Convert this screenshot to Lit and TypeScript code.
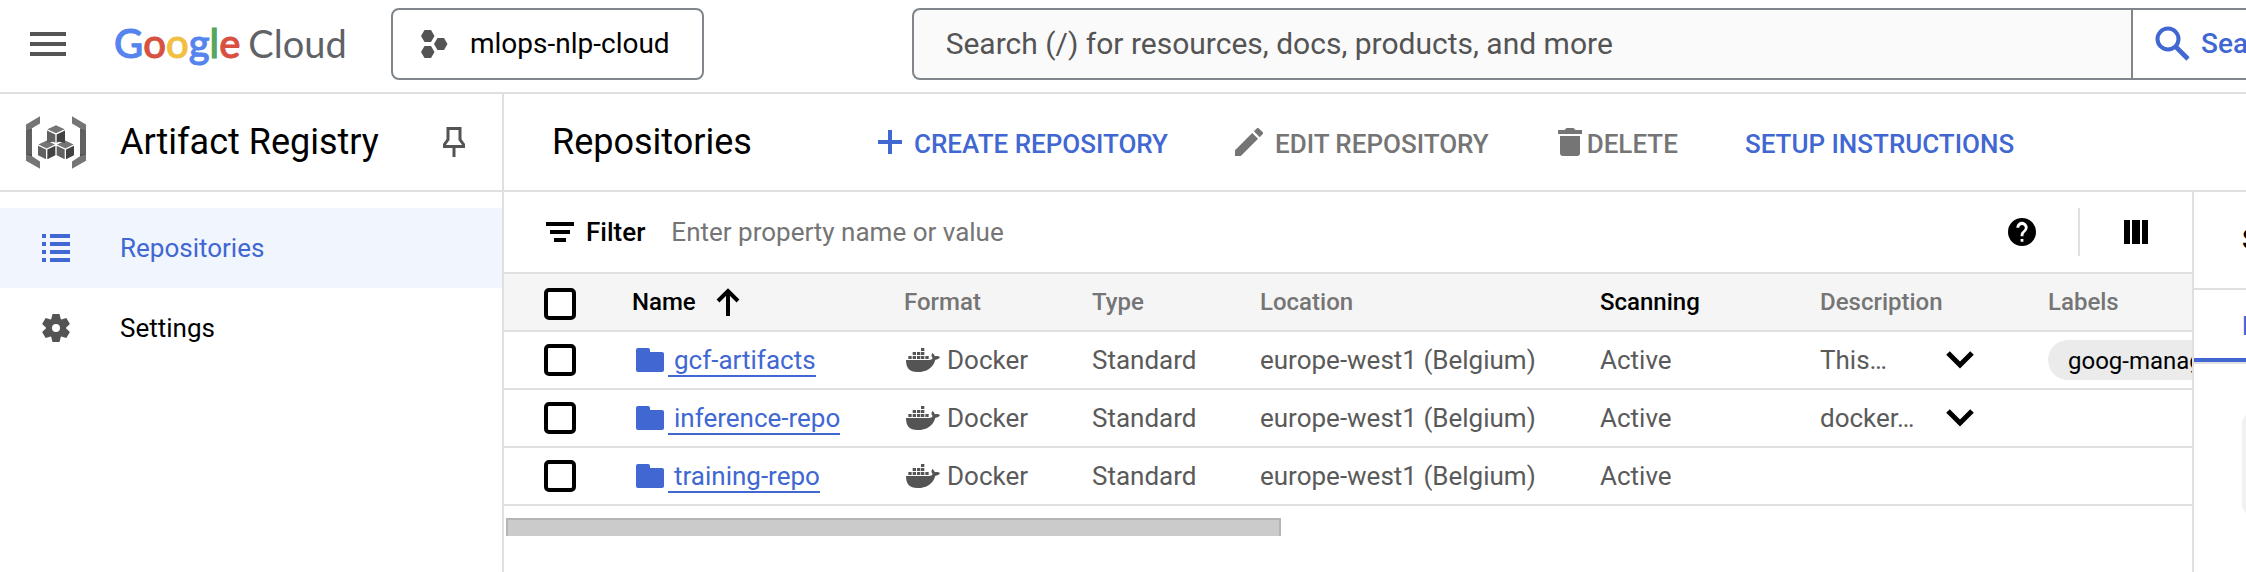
import { LitElement, html, css, svg, nothing } from 'lit';
import { customElement, state } from 'lit/decorators.js';

interface Repository {
  name: string;
  description: string;
  labels: string[];
}

const REPOSITORIES: Repository[] = [
  { name: 'gcf-artifacts', description: 'This…', labels: ['goog-managed-by: cloudfunctions'] },
  { name: 'inference-repo', description: 'docker…', labels: [] },
  { name: 'training-repo', description: '', labels: [] },
];

const icon = (w: number, h: number, viewBox: string, body: unknown) =>
  html`<svg width=${w} height=${h} viewBox=${viewBox} fill="currentColor" aria-hidden="true">${body}</svg>`;

const menuIcon = icon(36, 24, '0 0 36 24', svg`<path d="M0 0h36v4H0zM0 10h36v4H0zM0 20h36v4H0z"/>`);

const projectIcon = icon(27, 28, '0 0 27 28', svg`
  <path d="M3.5 0h6.5l3.5 6-3.5 6H3.5L0 6zM3.5 16h6.5l3.5 6-3.5 6H3.5L0 22zM16.5 8h6.5l3.5 6-3.5 6h-6.5L13 14z"/>`);

const searchIcon = icon(36, 36, '0 0 36 36', svg`
  <circle cx="13" cy="13" r="10.5" fill="none" stroke="currentColor" stroke-width="4"/>
  <path d="M20 20l13 13" stroke="currentColor" stroke-width="4.6"/>`);

const registryIcon = icon(60, 53, '0 0 180 158', svg`
  <path fill="#616161" d="M0 40h18v78H0zM162 40h18v78h-18z"/>
  <path fill="#757575" d="M0 25L42 0v22L18 36 0 45zM0 134l42 24v-22l-24-16-18-5zM180 25L138 0v22l24 14 18 9zM180 134l-42 24v-22l24-16 18-5z"/>
  <path fill="#424242" d="M0 45l18-9v4zM180 45l-18-9v4zM0 115l18 5v-5zM180 115l-18 5v-5z"/>
  <path fill="#757575" d="M90 27l26 12-26 12-26-12zM62 73l25 12-25 12-25-12zM118 73l25 12-25 12-25-12z"/>
  <path fill="#616161" d="M63 43l25 12v25l-7-3-18 3zM36 89l24 11v29l-24-12zM92 89l24 11v29l-24-12z"/>
  <path fill="#424242" d="M117 43L92 55v25l7-3 18 3zM88 89l-24 11v29l24-12zM144 89l-24 11v29l24-12z"/>`);

const pinIcon = icon(22, 30, '0 0 22 30', svg`
  <path d="M5 1.5h12v11l3.500 5v2h-19v-2l3.500-5z" fill="none" stroke="currentColor" stroke-width="3"/>
  <path d="M9.500 20h3v10h-3z"/>`);

const listIcon = icon(28, 28, '0 0 28 28', svg`
  <path d="M0 0h4v4H0zM0 8h4v4H0zM0 16h4v4H0zM0 24h4v4H0zM8 0h20v4H8zM8 8h20v4H8zM8 16h20v4H8zM8 24h20v4H8z"/>`);

const gearIcon = icon(28, 28, '-14 -14 28 28', svg`
  <circle r="7" fill="none" stroke="currentColor" stroke-width="6"/>
  ${[0, 60, 120].map(a => svg`<path transform="rotate(${a})" d="M-3.500-14h7l1.500 6h-10zM-3.500 14h7l1.500-6h-10z"/>`)}`);

const plusIcon = icon(24, 24, '0 0 24 24', svg`<path d="M10 0h4v10h10v4H14v10h-4V14H0v-4h10z"/>`);

const pencilIcon = icon(28, 28, '3 3 18 18', svg`
  <path d="M3 17.250V21h3.750L17.810 9.940l-3.750-3.750zM20.710 7.040a1 1 0 0 0 0-1.410l-2.340-2.340a1 1 0 0 0-1.410 0l-1.830 1.830 3.750 3.750z"/>`);

const trashIcon = icon(26, 28, '-2 0 26 28', svg`
  <path d="M0 2h6.500l2-2h7l2 2H24v4H0zM2 8h20v17a3 3 0 0 1-3 3H5a3 3 0 0 1-3-3z"/>`);

const filterIcon = icon(28, 20, '0 0 28 20', svg`<path d="M0 0h28v4H0zM4 8h20v4H4zM8 16h12v4H8z"/>`);

const helpIcon = icon(28, 28, '2 2 20 20', svg`
  <path d="M12 2a10 10 0 1 0 0 20 10 10 0 0 0 0-20zm1 17h-2v-2h2zm2.070-7.750l-.9.920C13.450 12.900 13 13.500 13 15h-2v-.5c0-1.100.45-2.100 1.170-2.830l1.240-1.260A2 2 0 1 0 10 9H8a4 4 0 1 1 7.070 2.250z"/>`);

const columnsIcon = icon(24, 24, '0 0 24 24', svg`<path d="M0 0h6v24H0zM8 0h8v24H8zM18 0h6v24h-6z"/>`);

const sortIcon = icon(24, 28, '0 0 24 28', svg`
  <path d="M12 28V3M2 13L12 3l10 10" fill="none" stroke="currentColor" stroke-width="4"/>`);

const folderIcon = icon(28, 24, '0 0 28 24', svg`
  <path d="M2 0h10a2 2 0 0 1 2 2v2h12a2 2 0 0 1 2 2v16a2 2 0 0 1-2 2H2a2 2 0 0 1-2-2V2a2 2 0 0 1 2-2z"/>`);

const dockerIcon = icon(34, 24, '0 0 102 72', svg`
  <path d="M45 0h10v9H45zM20 12h10v9H20zM33 12h10v9H33zM45 12h10v9H45zM7 24h10v9H7zM20 24h10v9H20zM33 24h10v9H33zM45 24h10v9H45zM58 24h10v9H58z"/>
  <path d="M0 36h68c7 0 11-3 12-6-5-4-4-11-1-15 4 3 7 6 7 10 6-2 12-1 16 2-3 6-8 8-14 8-7 25-26 37-54 37C10 72 0 60 0 36z"/>`);

const chevronIcon = icon(28, 18, '0 0 28 18', svg`
  <path d="M2 2l12 12L26 2" fill="none" stroke="currentColor" stroke-width="5"/>`);

@customElement('app-root')
export class AppRoot extends LitElement {
  @state() private selected = new Set<string>();

  static styles = css`
    :host {
      --blue: #4067d2;
      --line: #e0e0e0;
      --muted: #757575;
      --text: #5a5a5a;
      display: flex;
      flex-direction: column;
      min-height: 100vh;
      overflow: hidden;
      background: #fff;
      color: #000;
      font: 400 26px/32px Roboto, sans-serif;
    }
    * { box-sizing: border-box; }
    svg { display: block; flex: none; }
    button {
      margin: 0; padding: 0; border: 0; background: none;
      font: inherit; color: inherit; cursor: pointer;
      display: flex; align-items: center;
    }
    input { font: inherit; margin: 0; border: 0; outline: 0; background: none; min-width: 0; }
    input::placeholder { color: var(--muted); opacity: 1; }
    h1, h2 { margin: 0; font-size: 36px; font-weight: 400; line-height: 44px; white-space: nowrap; }

    .topbar {
      display: flex; align-items: center;
      height: 94px; padding: 0 0 4px 30px;
      border-bottom: 2px solid var(--line);
      flex: none;
    }
    .menu { color: #545454; }
    .logo {
      display: flex; align-items: baseline; gap: 8px;
      width: 234px; margin: 0 0 0 48px; padding-bottom: 3px;
      font-family: Lato, sans-serif; line-height: 48px;
      text-decoration: none; white-space: nowrap;
    }
    .google { font-size: 40px; font-weight: 500; -webkit-text-stroke: 1px currentColor; display: flex; }
    .cloud { font-size: 38px; color: #5f6368; }
    .g-blue { color: #5684ee; -webkit-text-stroke-color: #5684ee; }
    .g-red { color: #d85140; -webkit-text-stroke-color: #d85140; }
    .g-yellow { color: #f1bf42; -webkit-text-stroke-color: #f1bf42; }
    .g-green { color: #58a55c; -webkit-text-stroke-color: #58a55c; }
    .project {
      height: 72px; padding: 0 32px 0 28px; gap: 22px;
      margin: 0 208px 0 43px;
      border: 2px solid #80868b; border-radius: 8px;
      font-size: 28px; white-space: nowrap; flex: none;
    }
    .project svg { color: #545454; }
    .search {
      flex: 1; min-width: 0; display: flex; height: 72px;
      border: 2px solid #80868b; border-right: 0; border-radius: 8px 0 0 8px;
      background: #fafafa; overflow: hidden;
    }
    .search-box { flex: 1; padding: 0 32px; font-size: 30px; }
    .search-box::placeholder { color: #545454; }
    .search-go {
      width: 115px; padding-left: 22px; gap: 10px; overflow: hidden; flex: none;
      border-left: 2px solid #80868b; background: #fff;
      color: var(--blue); font-size: 28px; font-weight: 500;
    }

    .body { flex: 1; display: flex; min-width: 0; }
    .sidebar { width: 504px; flex: none; border-right: 2px solid var(--line); }
    .product {
      display: flex; align-items: center;
      height: 98px; padding: 0 37px 0 26px; gap: 34px;
      border-bottom: 2px solid var(--line);
    }
    .product h2 { flex: 1; }
    .pin { color: #545454; }
    .nav { padding-top: 16px; }
    .nav-item {
      display: flex; align-items: center; gap: 50px;
      height: 80px; padding-left: 42px;
      color: #000; text-decoration: none;
    }
    .nav-item svg { color: #545454; }
    .nav-item.active, .nav-item.active svg { color: var(--blue); }
    .nav-item.active { background: #f0f5fe; }

    .content { flex: 1; min-width: 0; display: flex; flex-direction: column; }
    .toolbar {
      display: flex; align-items: center; gap: 67px;
      height: 98px; padding-left: 48px;
      border-bottom: 2px solid var(--line);
    }
    .toolbar h1 { width: 259px; }
    .action {
      gap: 12px; color: var(--muted);
      font-weight: 500; white-space: nowrap; flex: none;
    }
    .action span { padding-top: 3px; }
    .action.primary { color: var(--blue); }
    .action.tight { gap: 5px; }

    .columns { flex: 1; display: flex; min-width: 0; }
    .listing { flex: 1; min-width: 0; overflow: hidden; }
    .filter { display: flex; align-items: center; height: 80px; padding: 0 44px 0 42px; }
    .filter label { display: flex; align-items: center; gap: 12px; font-weight: 500; }
    .filter-box { flex: 1; padding: 0 26px; }
    .divider { width: 2px; height: 48px; margin: 0 44px 0 42px; background: var(--line); }

    table { width: 100%; table-layout: fixed; border-collapse: separate; border-spacing: 0; }
    th, td { padding: 0; height: 58px; text-align: left; white-space: nowrap; border-bottom: 2px solid var(--line); }
    th {
      height: 60px; font-size: 24px; font-weight: 500; color: var(--muted);
      background: #f5f5f5; border-top: 2px solid var(--line);
    }
    th.strong { color: #000; }
    td { color: var(--text); }
    .c-check { width: 128px; }
    .c-name { width: 272px; }
    .c-format { width: 188px; }
    .c-type { width: 168px; }
    .c-location { width: 340px; }
    .c-scan { width: 220px; }
    .c-desc { width: 228px; }
    .check { padding-left: 40px; }
    th.check { padding-top: 4px; }
    .box {
      appearance: none; display: block; width: 32px; height: 32px;
      border: 4px solid #000; border-radius: 5px; background: #fff;
    }
    .box:checked { background: #000; }
    .cell { display: flex; align-items: center; }
    .sort { gap: 20px; }
    .name { padding-left: 4px; gap: 4px; color: var(--blue); }
    .link {
      color: var(--blue); text-decoration: none;
      padding: 2px 0 0 6px; line-height: 30px; border-bottom: 2px solid var(--blue);
    }
    .format { padding-left: 2px; gap: 7px; }
    .format svg { color: #545454; }
    .desc { justify-content: space-between; padding-right: 74px; }
    .desc button { color: #000; }
    .labels { overflow: hidden; }
    .chip {
      display: inline-block; vertical-align: middle; height: 40px; padding: 0 20px;
      border-radius: 20px; background: #ebebeb; color: #000;
      font-size: 24px; line-height: 42px;
    }
    .scroll { padding: 12px 2px 0; }
    .thumb {
      width: 46%; height: 18px; background: #cbcbcb;
      border: 2px solid #b5b5b5; border-bottom: 0;
    }

    .panel { width: 54px; flex: none; overflow: hidden; border-left: 2px solid var(--line); }
    .panel-title {
      height: 98px; padding: 32px 0 0 48px; border-bottom: 2px solid var(--line);
      font-size: 28px; font-weight: 500; white-space: nowrap;
    }
    .tabs { border-bottom: 2px solid var(--line); }
    .tab {
      width: 100%; height: 72px; padding: 4px 0 0 48px;
      border-bottom: 4px solid var(--blue); color: var(--blue); font-weight: 500;
    }
    .notice { width: 320px; height: 104px; margin: 48px 0 0 48px; border-radius: 12px; background: #f1f1f1; }
  `;

  private toggle(name: string) {
    const next = new Set(this.selected);
    next.has(name) ? next.delete(name) : next.add(name);
    this.selected = next;
  }

  private toggleAll() {
    this.selected =
      this.selected.size === REPOSITORIES.length ? new Set() : new Set(REPOSITORIES.map(r => r.name));
  }

  private renderRow(repo: Repository) {
    return html`
      <tr>
        <td class="check">
          <input class="box" type="checkbox" aria-label="Select ${repo.name}"
            .checked=${this.selected.has(repo.name)} @change=${() => this.toggle(repo.name)}>
        </td>
        <td><div class="cell name">${folderIcon}<a class="link" href="#${repo.name}">${repo.name}</a></div></td>
        <td><div class="cell format">${dockerIcon}<span>Docker</span></div></td>
        <td>Standard</td>
        <td>europe-west1 (Belgium)</td>
        <td>Active</td>
        <td>${repo.description
          ? html`<div class="cell desc"><span>${repo.description}</span>
              <button aria-label="Show description">${chevronIcon}</button></div>`
          : nothing}</td>
        <td class="labels">${repo.labels.map(l => html`<span class="chip">${l}</span>`)}</td>
      </tr>`;
  }

  render() {
    return html`
      <header class="topbar">
        <button class="menu" aria-label="Main menu">${menuIcon}</button>
        <a class="logo" href="#home" aria-label="Google Cloud">
          <span class="google"><span class="g-blue">G</span><span class="g-red">o</span><span class="g-yellow">o</span><span class="g-blue">g</span><span class="g-green">l</span><span class="g-red">e</span></span>
          <span class="cloud">Cloud</span>
        </a>
        <button class="project">${projectIcon}<span>mlops-nlp-cloud</span></button>
        <div class="search">
          <input class="search-box" type="text" aria-label="Search"
            placeholder="Search (/) for resources, docs, products, and more">
          <button class="search-go">${searchIcon}<span>Search</span></button>
        </div>
      </header>
      <div class="body">
        <aside class="sidebar">
          <div class="product">
            ${registryIcon}
            <h2>Artifact Registry</h2>
            <button class="pin" aria-label="Pin product">${pinIcon}</button>
          </div>
          <nav class="nav">
            <a class="nav-item active" href="#repositories">${listIcon}<span>Repositories</span></a>
            <a class="nav-item" href="#settings">${gearIcon}<span>Settings</span></a>
          </nav>
        </aside>
        <main class="content">
          <div class="toolbar">
            <h1>Repositories</h1>
            <button class="action primary">${plusIcon}<span>CREATE REPOSITORY</span></button>
            <button class="action">${pencilIcon}<span>EDIT REPOSITORY</span></button>
            <button class="action tight">${trashIcon}<span>DELETE</span></button>
            <button class="action primary"><span>SETUP INSTRUCTIONS</span></button>
          </div>
          <div class="columns">
            <section class="listing">
              <div class="filter">
                <label for="filter">${filterIcon}<span>Filter</span></label>
                <input id="filter" class="filter-box" type="text" placeholder="Enter property name or value">
                <button aria-label="Help">${helpIcon}</button>
                <div class="divider"></div>
                <button aria-label="Column display options">${columnsIcon}</button>
              </div>
              <table>
                <colgroup>
                  <col class="c-check"><col class="c-name"><col class="c-format"><col class="c-type">
                  <col class="c-location"><col class="c-scan"><col class="c-desc"><col>
                </colgroup>
                <thead>
                  <tr>
                    <th class="check">
                      <input class="box" type="checkbox" aria-label="Select all repositories"
                        .checked=${this.selected.size === REPOSITORIES.length} @change=${this.toggleAll}>
                    </th>
                    <th class="strong"><div class="cell sort"><span>Name</span>${sortIcon}</div></th>
                    <th>Format</th>
                    <th>Type</th>
                    <th>Location</th>
                    <th class="strong">Scanning</th>
                    <th>Description</th>
                    <th>Labels</th>
                  </tr>
                </thead>
                <tbody>${REPOSITORIES.map(r => this.renderRow(r))}</tbody>
              </table>
              <div class="scroll"><div class="thumb"></div></div>
            </section>
            <aside class="panel">
              <div class="panel-title">Select a repository</div>
              <div class="tabs"><button class="tab">PERMISSIONS</button></div>
              <div class="notice"></div>
            </aside>
          </div>
        </main>
      </div>
    `;
  }
}
